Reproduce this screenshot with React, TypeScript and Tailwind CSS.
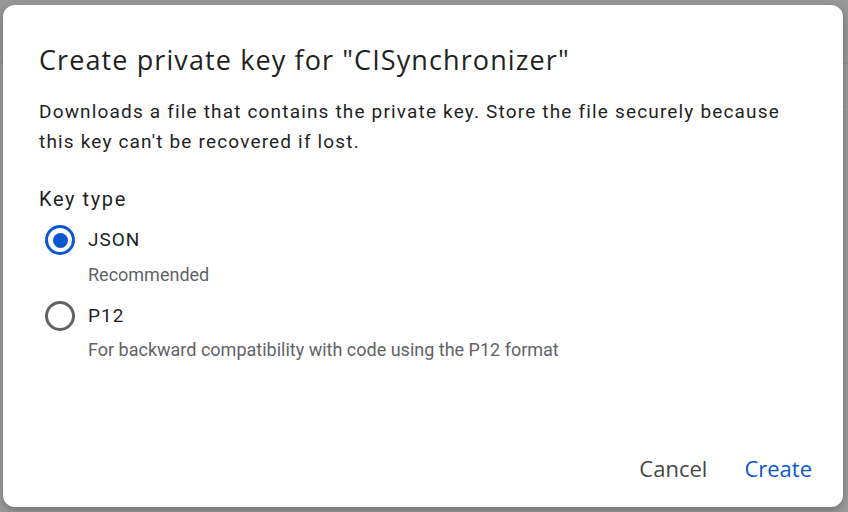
import React from "react";

function Radio({ checked }: { checked: boolean }) {
  return (
    <span
      className={
        "flex h-[30px] w-[30px] shrink-0 items-center justify-center rounded-full border-[3px] " +
        (checked ? "border-[#0b57d0]" : "border-[#5f6368]")
      }
    >
      {checked ? <span className="h-[15px] w-[15px] rounded-full bg-[#0b57d0]" /> : null}
    </span>
  );
}

export default function App() {
  return (
    <div className="relative h-[512px] w-[848px] overflow-hidden bg-[#9c9c9c] font-['Roboto',sans-serif]">
      <div className="h-[64px] border-b border-[#8e8e8e] bg-[#979797]" />
      <div className="h-[43px] border-b border-[#939393]" />

      <div className="absolute left-[3px] top-[5px] flex h-[502px] w-[840px] flex-col rounded-[12px] bg-white pl-[36px] pt-[37px] shadow-[0_4px_10px_rgba(0,0,0,0.25)]">
        <h1 className="text-[27px] leading-[36px] tracking-[1.1px] text-[#1f1f1f] font-['Open_Sans',sans-serif]">
          Create private key for "CISynchronizer"
        </h1>
        <p className="mt-[19px] pr-[40px] text-[19px] leading-[30px] tracking-[1.17px] text-[#1f1f1f]">
          Downloads a file that contains the private key. Store the file securely because this key can't be
          recovered if lost.
        </p>

        <div className="mt-[28px] text-[20px] leading-[28px] tracking-[1.6px] text-[#1f1f1f]">Key type</div>

        <label className="mt-[7px] flex h-[40px] items-center gap-[13px] pl-[6px]">
          <Radio checked />
          <span className="text-[19px] tracking-[1px] text-[#1f1f1f]">JSON</span>
        </label>
        <div className="mt-[3px] pl-[49px] text-[18px] leading-[24px] text-[#5f6368]">Recommended</div>

        <label className="mt-[9px] flex h-[40px] items-center gap-[13px] pl-[6px]">
          <Radio checked={false} />
          <span className="text-[19px] tracking-[1px] text-[#1f1f1f]">P12</span>
        </label>
        <div className="mt-[2px] pl-[49px] text-[18px] leading-[24px] text-[#5f6368]">
          For backward compatibility with code using the P12 format
        </div>

        <div className="mt-auto mb-[19px] flex justify-end gap-[13px] pr-[19px] font-['Open_Sans',sans-serif] text-[22px] font-medium">
          <button className="h-[40px] px-[12px] text-[#444746]">Cancel</button>
          <button className="h-[40px] px-[12px] text-[#0b57d0]">Create</button>
        </div>
      </div>
    </div>
  );
}
